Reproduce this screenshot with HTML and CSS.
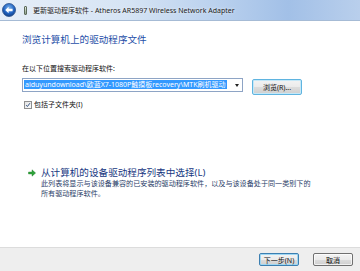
FILE: index.html
```html
<!DOCTYPE html>
<html lang="zh-CN">
<head>
  <meta charset="UTF-8" />
  <title>更新驱动程序软件</title>
  <link rel="stylesheet" href="styles.css">
</head>
<body>
  <div class="window">
    <!-- Title bar -->
    <div class="titlebar">
      <span class="back-btn">
        <svg width="14" height="14" viewBox="0 0 14 14">
          <defs>
            <radialGradient id="bg" cx="50%" cy="35%" r="65%">
              <stop offset="0" stop-color="#7fb3ea"/>
              <stop offset="0.6" stop-color="#2366c4"/>
              <stop offset="1" stop-color="#123f86"/>
            </radialGradient>
          </defs>
          <circle cx="7" cy="7" r="6.5" fill="url(#bg)" stroke="#2a4f8a" stroke-width="0.8"/>
          <path d="M3.2 7 L6.6 3.8 L6.6 5.8 L10.6 5.8 L10.6 8.2 L6.6 8.2 L6.6 10.2 Z" fill="#fff"/>
        </svg>
      </span>
      <span class="dev-icon"></span>
      <span class="title-text">更新驱动程序软件 - Atheros AR5897 Wireless Network Adapter</span>
    </div>

    <div class="content">
      <h1 class="heading">浏览计算机上的驱动程序文件</h1>

      <p class="label">在以下位置搜索驱动程序软件:</p>
      <div class="path-row">
        <div class="combo">
          <span class="combo-text"><span class="selected">aiduyundownload\欧蓝X7-1080P触摸板recovery\MTK刷机驱动</span></span>
          <span class="combo-arrow"></span>
        </div>
        <button class="btn btn-browse">浏览(R)...</button>
      </div>

      <label class="check-row">
        <span class="checkbox">
          <svg width="8" height="8" viewBox="0 0 8 8">
            <path d="M1.5 4.2 L3.2 6 L6.6 1.6" fill="none" stroke="#2f4f7f" stroke-width="1.3"/>
          </svg>
        </span>
        包括子文件夹(I)
      </label>

      <div class="cmd-link">
        <div class="cmd-title">
          <svg class="cmd-arrow" width="8" height="8" viewBox="0 0 8 8">
            <path d="M0.5 3 L4 3 L4 0.8 L7.6 4 L4 7.2 L4 5 L0.5 5 Z" fill="#2ea33a" stroke="#1d7a27" stroke-width="0.4"/>
          </svg>
          <span>从计算机的设备驱动程序列表中选择(L)</span>
        </div>
        <p class="cmd-desc">此列表将显示与该设备兼容的已安装的驱动程序软件，以及与该设备处于同一类别下的<br>所有驱动程序软件。</p>
      </div>
    </div>

    <div class="footer">
      <button class="btn btn-default">下一步(N)</button>
      <button class="btn">取消</button>
    </div>
  </div>
</body>
</html>
```

FILE: styles.css
```css
* { margin: 0; padding: 0; box-sizing: border-box; }
html, body { width: 360px; height: 271px; overflow: hidden; }
body {
  font-family: "Noto Sans", "Noto Sans CJK SC", sans-serif;
  background: #fff; color: #111;
}
.window {
  display: flex; flex-direction: column;
  width: 360px; height: 271px;
}

/* Title bar */
.titlebar {
  height: 21px; flex: none;
  display: flex; align-items: center;
  padding-left: 2px;
  background: linear-gradient(to right, #e6eef8 0%, #d6e4f4 35%, #bad1ee 60%, #a2c0e7 80%, #b9cfec 100%);
  border-bottom: 1px solid #a6bbd5;
}
.back-btn { display: flex; width: 14px; height: 14px; }
.dev-icon {
  width: 3px; height: 9px; margin-left: 8px;
  background: linear-gradient(#e8efe4, #8a9c88);
  border: 1px solid #5d6b5a;
  border-radius: 1px;
}
.title-text {
  margin-left: 6px;
  font-size: 7px;
  color: #1b1b1b;
  white-space: nowrap;
  text-shadow: 0 0 3px rgba(255,255,255,0.9);
}

/* Content */
.content {
  flex: 1;
  padding: 12px 0 0 22px;
}
.heading {
  font-size: 9.6px; font-weight: normal;
  line-height: 14px;
  color: #1f4fa8;
}
.label {
  margin-top: 17px;
  font-size: 7px; line-height: 10px;
}
.path-row {
  display: flex; align-items: flex-start;
  margin-top: 4px;
  gap: 9px;
}
.combo {
  width: 221px; height: 14px;
  display: flex; align-items: center;
  border: 1px solid #8ea4c5;
  background: #fff;
}
.combo-text {
  flex: 1; overflow: hidden; white-space: nowrap;
  padding-left: 1px;
  font-size: 7px; line-height: 10px;
}
.selected { background: #3399ff; color: #fff; padding: 0 1px; }
.combo-arrow {
  width: 9px; height: 12px; flex: none;
  position: relative;
}
.combo-arrow::after {
  content: ""; position: absolute;
  left: 2px; top: 5px;
  border-left: 2.5px solid transparent;
  border-right: 2.5px solid transparent;
  border-top: 3px solid #222;
}

.btn {
  font-family: "Noto Sans", "Noto Sans CJK SC", sans-serif;
  font-size: 7px; color: #111;
  height: 13px; width: 40px;
  border: 1px solid #707070; border-radius: 2px;
  background: linear-gradient(#f3f3f3 0%, #ebebeb 50%, #dddddd 51%, #cfcfcf 100%);
  box-shadow: inset 0 0 0 1px rgba(255,255,255,0.7);
}
.btn-browse {
  width: 50px; height: 16px; margin-top: 1px;
  border-color: #5fb4e0;
  box-shadow: inset 0 0 0 1px #c4e8f8;
}
.btn-default {
  border-color: #3c7fb1;
  box-shadow: inset 0 0 0 1px #9fd7f3;
}

.check-row {
  display: flex; align-items: center; gap: 2px;
  margin-top: 5px;
  font-size: 7px; line-height: 10px;
  padding-left: 2px;
}
.checkbox {
  display: flex; align-items: center; justify-content: center;
  width: 8px; height: 8px;
  border: 1px solid #8f8f8f;
  background: linear-gradient(135deg, #e4e4e4, #fafafa);
}

/* Command link */
.cmd-link {
  margin-top: 57px;
  padding-left: 6px;
}
.cmd-title {
  display: flex; align-items: center; gap: 5px;
  font-size: 9.6px; line-height: 12px;
  color: #17377f;
}
.cmd-arrow { flex: none; }
.cmd-desc {
  margin: -1px 0 0 13px;
  font-size: 7.1px; line-height: 10px;
  color: #2a3d68;
}

/* Footer */
.footer {
  height: 24px; flex: none;
  display: flex; justify-content: flex-end; align-items: flex-start;
  gap: 14px;
  padding: 5px 7px 0 0;
  background: #eeeeee;
  border-top: 1px solid #dcdcdc;
}
```
